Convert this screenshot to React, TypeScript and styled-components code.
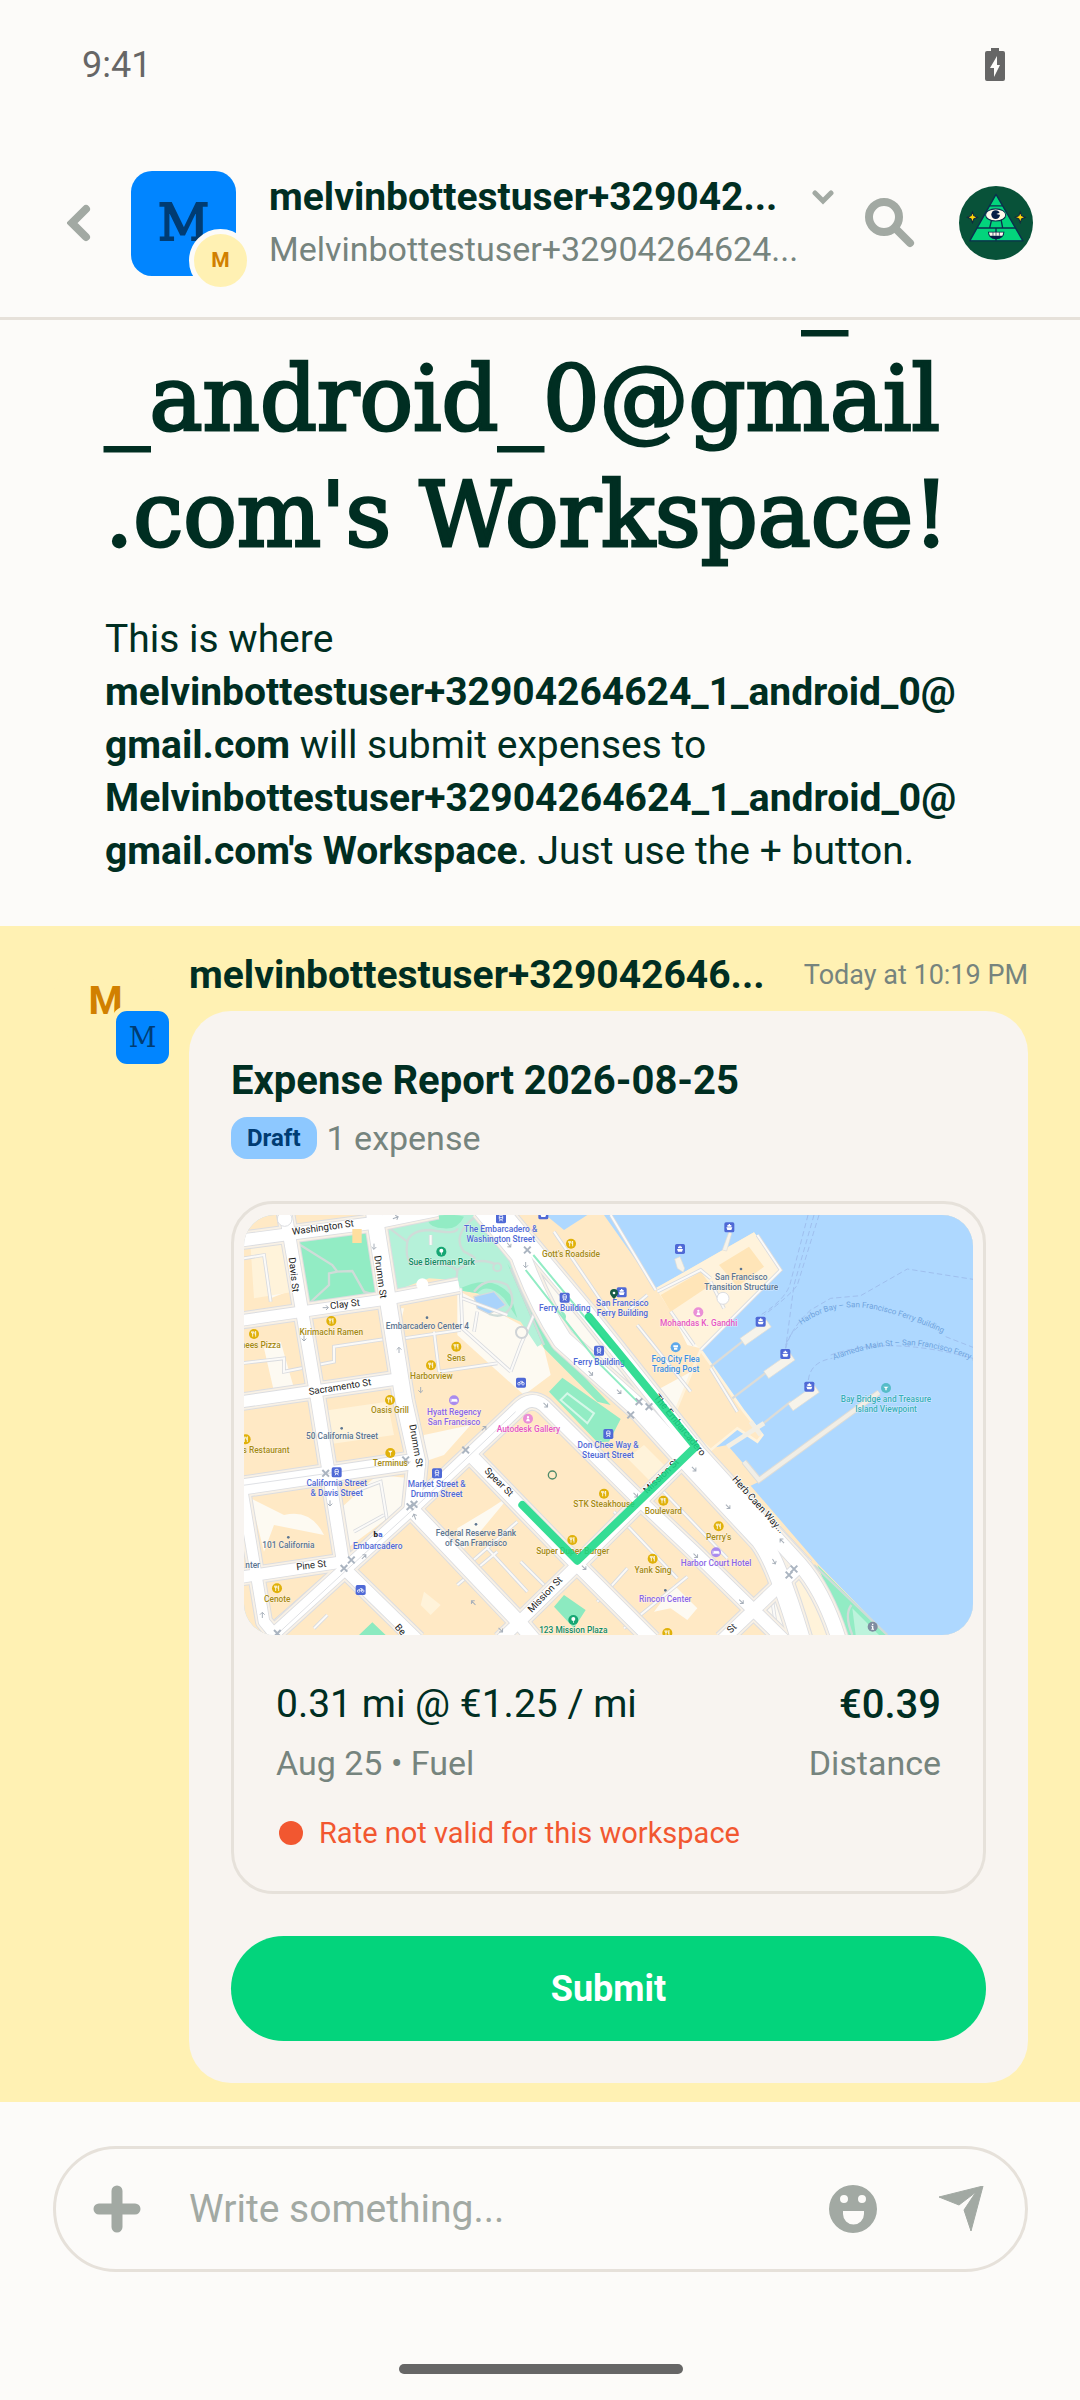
import React from "react";
import styled, { createGlobalStyle } from "styled-components";

const color = {
  bg: "#fcfbf9",
  card: "#f8f4f0",
  border: "#e6e1da",
  text: "#002e22",
  muted: "#76847e",
  icon: "#a2a9a3",
  highlight: "#fff1b3",
  green: "#03d47c",
  red: "#f25730",
  blue: "#0185ff",
  navy: "#003c73",
  sky: "#8dc8ff",
  amber: "#d18000",
  system: "#666666",
};
const sans = `Roboto, "Noto Sans", sans-serif`;
const serif = `"DejaVu Serif", "Liberation Serif", serif`;

const GlobalStyle = createGlobalStyle`
  *, *::before, *::after { box-sizing: border-box; }
  body { margin: 0; background: ${color.bg}; font-family: ${sans}; color: ${color.text}; }
  button, input { font-family: inherit; }
  svg { display: block; }
`;

const Screen = styled.div`
  display: flex;
  flex-direction: column;
  height: 100vh;
  background: ${color.bg};
`;

const StatusBar = styled.div`
  display: flex;
  flex: none;
  align-items: center;
  justify-content: space-between;
  height: 129px;
  padding: 0 75px 0 82px;
  color: ${color.system};
  font-size: 36px;
  line-height: 42px;
`;

const Toolbar = styled.header`
  display: flex;
  flex: none;
  align-items: center;
  height: 191px;
  padding: 0 34px 0 26px;
  border-bottom: 3px solid ${color.border};
`;

const IconButton = styled.button<{ $w: number }>`
  display: flex;
  flex: none;
  align-items: center;
  justify-content: center;
  width: ${(p) => p.$w}px;
  height: 105px;
  padding: 0;
  border: 0;
  background: none;
  color: ${color.icon};
`;

const AvatarStack = styled.div`
  position: relative;
  flex: none;
  width: 105px;
  height: 105px;
`;

const MainAvatar = styled.div<{ $kind: "workspace" | "user" }>`
  display: flex;
  align-items: center;
  justify-content: center;
  width: 105px;
  height: 105px;
  border-radius: ${(p) => (p.$kind === "workspace" ? "21px" : "50%")};
  background: ${(p) => (p.$kind === "workspace" ? color.blue : color.highlight)};
  color: ${(p) => (p.$kind === "workspace" ? color.navy : color.amber)};
  font-family: ${(p) => (p.$kind === "workspace" ? serif : sans)};
  font-weight: ${(p) => (p.$kind === "workspace" ? 400 : 700)};
  font-size: ${(p) => (p.$kind === "workspace" ? 50 : 39)}px;
  -webkit-text-stroke: ${(p) => (p.$kind === "workspace" ? "2px" : "0")};
`;

const SubAvatar = styled.div<{ $kind: "workspace" | "user"; $ring: string }>`
  position: absolute;
  right: -16px;
  bottom: -16px;
  display: flex;
  align-items: center;
  justify-content: center;
  width: 63px;
  height: 63px;
  border: 5px solid ${(p) => p.$ring};
  border-radius: ${(p) => (p.$kind === "workspace" ? "16px" : "50%")};
  background: ${(p) => (p.$kind === "workspace" ? color.blue : color.highlight)};
  color: ${(p) => (p.$kind === "workspace" ? color.navy : color.amber)};
  font-family: ${(p) => (p.$kind === "workspace" ? serif : sans)};
  font-weight: ${(p) => (p.$kind === "workspace" ? 400 : 700)};
  font-size: ${(p) => (p.$kind === "workspace" ? 27 : 21)}px;
`;

const TitleBlock = styled.div`
  flex: 1;
  min-width: 0;
  padding-left: 33px;
  line-height: 52px;
  white-space: nowrap;
`;
const TitleRow = styled.div`
  display: flex;
  align-items: center;
  justify-content: space-between;
`;
const TitleText = styled.h1`
  margin: 0;
  font-size: 39px;
  font-weight: 700;
`;
const Subtitle = styled.div`
  color: ${color.muted};
  font-size: 34px;
`;
const MenuButton = styled.button`
  display: flex;
  align-items: center;
  height: 52px;
  padding: 0;
  border: 0;
  background: none;
  color: ${color.icon};
`;

const Chat = styled.main`
  display: flex;
  flex: 1;
  flex-direction: column;
  justify-content: flex-end;
  min-height: 0;
  overflow: hidden;
`;

const Intro = styled.section`
  flex: none;
  padding: 0 105px 48px;
`;
const Welcome = styled.h2`
  margin: 0 0 40px;
  font-family: ${serif};
  font-size: 89px;
  font-weight: 400;
  line-height: 116px;
  white-space: nowrap;
  -webkit-text-stroke: 3px ${color.text};
  span { display: block; }
`;
const IntroText = styled.p`
  margin: 0;
  font-size: 39px;
  line-height: 53px;
`;

const Message = styled.article`
  display: flex;
  flex: none;
  gap: 31px;
  padding: 22px 52px 19px 53px;
  background: ${color.highlight};
`;
const MessageBody = styled.div`
  flex: 1;
  min-width: 0;
`;
const MessageHead = styled.div`
  display: flex;
  align-items: center;
  justify-content: space-between;
  margin-bottom: 8px;
  line-height: 55px;
  white-space: nowrap;
`;
const Author = styled.span`
  font-size: 39px;
  font-weight: 700;
`;
const Time = styled.time`
  color: ${color.muted};
  font-size: 27px;
`;

const ReportCard = styled.div`
  padding: 42px;
  border-radius: 42px;
  background: ${color.card};
`;
const ReportTitle = styled.h3`
  margin: 0 0 9px;
  font-size: 40px;
  font-weight: 700;
  line-height: 55px;
`;
const ReportMeta = styled.div`
  display: flex;
  align-items: center;
  gap: 10px;
  margin-bottom: 42px;
  color: ${color.muted};
  font-size: 34px;
  line-height: 42px;
`;
const Badge = styled.span`
  padding: 0 16px;
  border-radius: 16px;
  background: ${color.sky};
  color: ${color.navy};
  font-size: 24px;
  font-weight: 700;
`;

const ExpenseCard = styled.div`
  margin-bottom: 42px;
  padding: 11px 10px 37px;
  border: 3px solid ${color.border};
  border-radius: 42px;
`;
const MapFrame = styled.div`
  height: 420px;
  margin-bottom: 43px;
  overflow: hidden;
  border-radius: 31px;
  background: #aed8ff;
  svg { width: 100%; height: 100%; }
`;
const Line = styled.div<{ $minor?: boolean }>`
  display: flex;
  justify-content: space-between;
  margin-bottom: ${(p) => (p.$minor ? 24 : 7)}px;
  padding: 0 32px;
  color: ${(p) => (p.$minor ? color.muted : color.text)};
  font-size: ${(p) => (p.$minor ? 34 : 39)}px;
  line-height: ${(p) => (p.$minor ? 50 : 53)}px;
`;
const Amount = styled.span`
  font-size: 40px;
  font-weight: 500;
`;
const Violation = styled.div`
  display: flex;
  align-items: center;
  gap: 16px;
  padding: 0 35px;
  color: ${color.red};
  font-size: 29px;
  line-height: 42px;
  &::before {
    content: "";
    width: 24px;
    height: 24px;
    border-radius: 50%;
    background: ${color.red};
  }
`;
const SubmitButton = styled.button`
  display: block;
  width: 100%;
  height: 105px;
  border: 0;
  border-radius: 53px;
  background: ${color.green};
  color: #fff;
  font-size: 36px;
  font-weight: 700;
`;

const Footer = styled.footer`
  flex: none;
  padding: 44px 52px 26px 53px;
`;
const Composer = styled.form`
  display: flex;
  align-items: center;
  height: 126px;
  padding: 0 8px;
  border: 3px solid ${color.border};
  border-radius: 63px;
`;
const ComposerInput = styled.input`
  flex: 1;
  min-width: 0;
  height: 53px;
  padding: 0 0 0 20px;
  border: 0;
  outline: 0;
  background: none;
  color: ${color.text};
  font-size: 39px;
  &::placeholder { color: ${color.icon}; opacity: 1; }
`;
const HomeBar = styled.div`
  width: 284px;
  height: 10px;
  margin: 92px auto 0;
  border-radius: 5px;
  background: ${color.system};
`;

/* ---------- map ---------- */

type Label = { x: number; y: number; c: string; t: string[]; icon?: string; ix?: number; iy?: number };
const gold = "#a58a12", transit = "#4f69d6", slate = "#5c7590", violet = "#8b66e6", pink = "#e656c2";

const labels: Label[] = [
  { x: 262, y: 359, c: gold, t: ["Kirimachi Ramen"], icon: "food", ix: 262, iy: 318 },
  { x: 50, y: 399, c: gold, t: ["nees Pizza"], icon: "food", ix: 30, iy: 357 },
  { x: 637, y: 437, c: gold, t: ["Sens"], icon: "food", ix: 637, iy: 395 },
  { x: 562, y: 493, c: gold, t: ["Harborview"], icon: "food", ix: 561, iy: 451 },
  { x: 438, y: 595, c: gold, t: ["Oasis Grill"], icon: "food", ix: 438, iy: 555 },
  { x: 981, y: 127, c: gold, t: ["Gott's Roadside"], icon: "food", ix: 981, iy: 86 },
  { x: 66, y: 715, c: gold, t: ["s Restaurant"], icon: "food", ix: 5, iy: 673 },
  { x: 439, y: 753, c: gold, t: ["Terminus"], icon: "bar", ix: 439, iy: 714 },
  { x: 1080, y: 877, c: gold, t: ["STK Steakhouse"], icon: "food", ix: 1080, iy: 836 },
  { x: 986, y: 1018, c: gold, t: ["Super Duper Burger"], icon: "food", ix: 985, iy: 975 },
  { x: 100, y: 1161, c: gold, t: ["Cenote"], icon: "food", ix: 99, iy: 1120 },
  { x: 1258, y: 898, c: gold, t: ["Boulevard"], icon: "food", ix: 1258, iy: 857 },
  { x: 1424, y: 975, c: gold, t: ["Perry's"], icon: "food", ix: 1424, iy: 934 },
  { x: 1227, y: 1073, c: gold, t: ["Yank Sing"], icon: "food", ix: 1226, iy: 1031 },
  { x: 770, y: 50, c: transit, t: ["The Embarcadero &", "Washington Street"], icon: "tram", ix: 771, iy: 10 },
  { x: 962, y: 288, c: transit, t: ["Ferry Building"], icon: "tram", ix: 962, iy: 248 },
  { x: 1135, y: 273, c: transit, t: ["San Francisco", "Ferry Building"], icon: "ferry", ix: 1133, iy: 232 },
  { x: 1065, y: 449, c: transit, t: ["Ferry Building"], icon: "tram", ix: 1065, iy: 407 },
  { x: 1092, y: 699, c: transit, t: ["Don Chee Way &", "Steuart Street"], icon: "tram", ix: 1093, iy: 657 },
  { x: 278, y: 813, c: transit, t: ["California Street", "& Davis Street"], icon: "tram", ix: 278, iy: 772 },
  { x: 578, y: 816, c: transit, t: ["Market Street &", "Drumm Street"], icon: "tram", ix: 579, iy: 775 },
  { x: 401, y: 1002, c: transit, t: ["Embarcadero"] },
  { x: 550, y: 341, c: slate, t: ["Embarcadero Center 4"], icon: "dot", ix: 549, iy: 308 },
  { x: 294, y: 672, c: slate, t: ["50 California Street"], icon: "dot", ix: 293, iy: 640 },
  { x: 133, y: 1000, c: slate, t: ["101 California"], icon: "dot", ix: 133, iy: 967 },
  { x: 696, y: 962, c: slate, t: ["Federal Reserve Bank", "of San Francisco"], icon: "dot", ix: 696, iy: 928 },
  { x: 1492, y: 195, c: slate, t: ["San Francisco", "Transition Structure"], icon: "dot", ix: 1491, iy: 162 },
  { x: 26, y: 1059, c: slate, t: ["nter"] },
  { x: 593, y: 151, c: "#138a63", t: ["Sue Bierman Park"], icon: "park", ix: 592, iy: 110 },
  { x: 988, y: 1255, c: "#138a63", t: ["123 Mission Plaza"], icon: "park", ix: 988, iy: 1215 },
  { x: 630, y: 599, c: violet, t: ["Hyatt Regency", "San Francisco"], icon: "hotel", ix: 630, iy: 556 },
  { x: 1416, y: 1053, c: violet, t: ["Harbor Court Hotel"], icon: "hotel", ix: 1416, iy: 1012 },
  { x: 1264, y: 1160, c: violet, t: ["Rincon Center"], icon: "dot", ix: 1264, iy: 1126 },
  { x: 853, y: 652, c: pink, t: ["Autodesk Gallery"], icon: "sight", ix: 852, iy: 611 },
  { x: 1364, y: 332, c: pink, t: ["Mohandas K. Gandhi"], icon: "sight", ix: 1363, iy: 292 },
  { x: 1295, y: 440, c: "#3c8fe0", t: ["Fog City Flea", "Trading Post"], icon: "shop", ix: 1295, iy: 397 },
  { x: 1926, y: 562, c: "#37afb8", t: ["Bay Bridge and Treasure", "Island Viewpoint"], icon: "view", ix: 1926, iy: 519 },
];

const extraPins: [string, number, number][] = [
  ["ferry", 1308, 102], ["ferry", 1456, 37], ["ferry", 1550, 320], ["ferry", 1624, 417], ["ferry", 1696, 515],
  ["ferry", 898, -2], ["bike", 831, 503], ["bike", 350, 1125], ["food", 1270, 1254], ["info", 1886, 1235],
];

const streetNames: [string, number, number, number][] = [
  ["Washington St", 238, 47, -8], ["Davis St", 140, 180, 84], ["Drumm St", 400, 187, 82], ["Clay St", 304, 277, -7],
  ["Sacramento St", 289, 525, -9], ["Drumm St", 507, 694, 80], ["Spear St", 758, 808, 45], ["Pine St", 203, 1060, -7],
  ["Mission St", 910, 1145, -46], ["Mission St", 1258, 790, -44], ["Herb Caen Way...", 1536, 875, 48],
  ["The Embarcadero", 1300, 636, 51], ["St", 1470, 1247, -45], ["Be", 462, 1250, 48],
];

const roads: { d: string; w: number }[] = [
  { d: "M-20 78 L400 22 L580 -15", w: 36 },
  { d: "M-20 318 L435 252 L645 212", w: 32 },
  { d: "M-20 562 L460 492", w: 34 },
  { d: "M-20 818 L540 735", w: 46 },
  { d: "M-20 1088 L300 1040", w: 34 },
  { d: "M122 -20 L220 560 L300 1060 L520 1275", w: 36 },
  { d: "M388 -20 L480 560 L520 740 L505 885", w: 48 },
  { d: "M-5 830 L60 1220 L105 1275", w: 32 },
  { d: "M80 1265 L300 1065 L505 880 L820 582 Q860 540 900 572 L1175 845 L1355 1015 L1620 1275", w: 36 },
  { d: "M665 705 L1000 1050 L1225 1275", w: 38 },
  { d: "M505 885 L825 1222 L870 1275", w: 42 },
  { d: "M1355 695 L1000 1050 L770 1275", w: 34 },
  { d: "M1655 1065 L1435 1275", w: 36 },
  { d: "M715 -20 L830 120 Q880 260 955 375 L1195 590 L1345 755 L1550 975 Q1600 1040 1670 1275", w: 56 },
  { d: "M775 -10 L1035 300 L1285 615 L1365 715 L1665 1045 Q1740 1130 1785 1275", w: 42 },
];

const alleys = [
  "M480 370 L650 345 M570 350 L585 470 M585 470 L760 445 M-10 445 L120 430 L120 470 L270 440 L270 395 L470 365",
  "M650 220 L655 340 L800 470 M655 250 L790 300 M800 470 L830 390 L900 230 M700 290 L690 350",
  "M930 50 L1100 300 M1100 0 L1235 225 M1150 290 L1210 240 M1240 230 L1370 165 L1400 190 M1540 60 L1610 165 L1370 405",
  "M1280 290 L1350 390 M1400 200 L1440 280 M1180 330 L1340 530 M1400 460 L1480 590",
  "M820 920 L660 1060 L760 1170 M640 1110 L760 1010 M730 1000 L850 1130 M830 1040 L920 1130",
  "M1110 890 L1300 1090 M1220 790 L1450 1030 M1330 1085 L1140 1240 M1150 1060 L1060 1160 M1440 800 L1560 930",
  "M290 900 L320 1040 M330 830 L410 800 L430 920 M330 950 L420 900 M90 1220 L330 1010 M250 1200 L210 1240",
  "M1480 800 L1700 1040 M1560 990 L1600 1260 M1600 1100 L1640 1250",
  "M0 130 L60 120 L80 260 M20 90 L110 80 M560 60 L560 90",
];

function Pin({ kind, x, y }: { kind: string; x: number; y: number }) {
  const fills: Record<string, string> = {
    food: "#e0b10a", bar: "#e0b10a", park: "#17a673", hotel: "#a98bee", sight: "#ea8fd6", shop: "#5ea8ea",
    view: "#56bcc8", info: "#7e8ca0",
  };
  if (kind === "dot") return <circle cx={x} cy={y} r={4} fill={slate} />;
  if (kind === "tram" || kind === "ferry" || kind === "bike") {
    return (
      <g transform={`translate(${x} ${y})`}>
        <rect x={-15} y={-15} width={30} height={30} rx={5} fill="#4f69d6" />
        {kind === "tram" && (
          <g fill="none" stroke="#fff" strokeWidth={2.5}>
            <rect x={-5} y={-9} width={10} height={13} rx={3} />
            <path d="M-5 -2 H5 M-5 9 L-2 4 M5 9 L2 4" />
          </g>
        )}
        {kind === "ferry" && <path d="M-9 0 H9 L6 8 H-6 Z M-6 -2 V-7 H6 V-2 Z M-2 -7 V-10 H2 V-7 Z" fill="#fff" />}
        {kind === "bike" && (
          <g fill="none" stroke="#fff" strokeWidth={2}>
            <circle cx={-6} cy={3} r={4} />
            <circle cx={6} cy={3} r={4} />
            <path d="M-6 3 L-2 -4 H4 L6 3 M0 3 L4 -4" />
          </g>
        )}
      </g>
    );
  }
  return (
    <g transform={`translate(${x} ${y})`}>
      <circle r={15} fill={fills[kind]} />
      {kind === "food" && <path d="M-4 -8 V8 M-7 -8 V-3 Q-4 0 -1 -3 V-8 M5 8 V-8 Q2 -6 3 1 H5" fill="none" stroke="#fff" strokeWidth={2.4} />}
      {kind === "bar" && <path d="M-7 -7 H7 L0 1 Z M-1 0 H1 V8 H-1 Z" fill="#fff" />}
      {kind === "park" && <path d="M0 -9 a6 6 0 0 1 0 12 a6 6 0 0 1 0 -12 M-1 0 H1 V9 H-1 Z" fill="#fff" />}
      {kind === "hotel" && <path d="M-9 -5 V6 M-9 3 H9 M9 6 V-1 M-6 -3 H8 V2 H-6 Z" fill="#fff" stroke="#fff" strokeWidth={2} />}
      {kind === "sight" && <path d="M-3 0 H3 L6 8 H-6 Z M0 -8 a3 3 0 0 1 0 7 a3 3 0 0 1 0 -7" fill="#fff" />}
      {kind === "shop" && <path d="M-7 -6 H7 V0 H-7 Z M-5 1 H5 V7 H-5 Z" fill="#fff" />}
      {kind === "view" && <path d="M-8 -4 H8 L2 1 V7 H-2 V1 Z" fill="#fff" />}
      {kind === "info" && <path d="M-2 -9 H2 V-5 H-2 Z M-4 -3 H2 V6 H4 V9 H-4 V6 H-2 V0 H-4 Z" fill="#fff" />}
    </g>
  );
}

const crossings = [[485, 735], [245, 775], [510, 868], [498, 875], [665, 705], [300, 1060], [322, 1035], [850, 105], [1185, 560], [1215, 575], [1160, 600], [1635, 1080], [1650, 1062], [100, 1255]];
const arrows: [number, number, number][] = [
  [390, 95, 90], [180, 370, 90], [465, 405, -90], [530, 525, 90], [795, 90, 50], [845, 150, 90], [1040, 475, 45],
  [1125, 530, 45], [1175, 840, 45], [1350, 762, 45], [1452, 875, 45], [1355, 1022, 45], [1590, 1040, 60], [1614, 978, -135],
  [1492, 1160, 45], [1020, 1058, 45], [360, 1025, -45], [512, 905, -110], [258, 865, 90], [55, 1200, -90], [688, 1163, -135],
  [770, 1245, 45], [720, 640, -45], [245, 278, 0], [905, 570, 45], [455, 8, -20],
];

function TripMap() {
  return (
    <svg viewBox="0 0 2187 1260" preserveAspectRatio="xMidYMid slice" role="img" aria-label="Trip route map">
      <rect width={2187} height={1260} fill="#ffe9c5" />
      {/* open plazas and paler blocks */}
      <g fill="#fdfaf2">
        <path d="M640 225 L830 330 L900 400 L920 480 L840 540 L640 360 Z" />
        <path d="M840 130 L1040 330 L1190 560 L1080 520 L940 350 Z" />
        <path d="M20 850 L120 900 Q200 880 240 960 L90 930 L60 1010 Z" />
        <path d="M290 880 L400 780 L500 790 L470 880 L310 1000 Z" />
        <path d="M540 660 L680 630 L600 720 L540 740 Z M740 880 L800 840 L700 960 L640 1020 L640 940 Z" />
        <path d="M1545 1200 L1605 1130 L1640 1250 L1570 1250 Z" />
        <path d="M1280 290 L1440 200 L1500 260 L1370 400 L1330 390 Z M1230 530 L1360 460 L1420 500 L1290 600 Z" />
        <path d="M1290 1110 L1360 1180 L1330 1215 L1280 1180 L1230 1190 Z" />
        <path d="M430 280 L460 370 L480 280 Z M75 130 L110 120 L130 230 L80 250 Z M60 400 L110 380 L150 520 L90 530 Z" />
      </g>
      <g fill="#fff3da">
        <path d="M20 100 L130 85 L150 230 L30 250 Z M220 590 L430 560 L450 660 L240 690 Z" />
        <path d="M540 1130 L590 1170 L560 1200 L530 1170 Z M1560 1010 L1620 1110 L1680 1260 L1760 1260 L1700 1140 L1560 950 Z" />
        <path d="M1200 690 L1300 790 L1250 830 L1150 730 Z M1350 990 L1450 1080 L1470 1130 L1430 1060 Z" />
      </g>
      {/* bay */}
      <path d="M1080 0 L1140 85 L1235 220 L1530 52 L1613 165 L1370 405 L1400 460 L1500 590 L1400 700 L1450 690 L1545 800 L1520 812 L1725 1050 L1930 1260 H2187 V0 Z" fill="#aed8ff" />
      <path d="M905 0 L960 45 L1030 0 Z" fill="#aed8ff" />
      <path d="M1235 220 L1530 52 L1613 165 L1370 405 L1320 350 Z" fill="#fff3dc" />
      <path d="M1425 150 L1515 95 L1560 155 L1480 215 Z M1250 240 L1370 170 L1400 210 L1280 290 Z" fill="#ffe5b8" />
      <path d="M1370 405 L1500 590 L1555 660 L1540 680 L1480 640 L1400 705 L1290 600 Z" fill="#ffe9c5" stroke="#fff3dc" strokeWidth={8} />
      {/* parks */}
      <path d="M430 30 L560 -5 H700 L800 130 L860 260 L905 380 L880 395 L830 320 L780 300 L700 235 L640 225 L630 195 L555 190 L460 225 Z" fill="#b5f1d9" />
      <path d="M140 65 L365 27 L398 240 L172 275 Z M550 15 Q600 -10 660 5 Q640 45 600 40 Q560 40 550 15 Z M640 225 Q740 170 800 240 L820 310 L780 250 Q730 200 700 235 Z M790 145 L940 400 L1100 570 L1060 560 L900 400 Z M915 530 L955 488 L1130 612 L1095 680 L1060 682 Z M1720 1050 L1805 1260 H1930 Z" fill="#92ecc4" />
      <path d="M930 1175 L960 1140 L1025 1185 L990 1240 Z M345 1260 L385 1222 L425 1260 Z" fill="#8ceac0" />
      <path d="M1825 1180 L1905 1260 H1835 Z" fill="#bdf3dc" />
      <path d="M950 555 L970 535 L1050 595 L1030 625 Z" fill="none" stroke="#d5f8e8" strokeWidth={6} />
      <circle cx={950} cy={305} r={16} fill="#92ecc4" />
      <circle cx={1030} cy={417} r={15} fill="#92ecc4" />
      <path d="M690 245 L750 230 L785 270 L735 297 L700 280 Z" fill="#a9d3fb" stroke="#d6dadd" strokeWidth={4} />
      <g fill="none" stroke="#cfdcd8" strokeWidth={7}>
        <path d="M145 75 L265 150 L280 170 L325 168 L360 230 L395 240 M280 170 L255 175 L255 210 L190 270" />
        <path d="M430 35 L490 80 Q480 150 520 150 M490 80 Q500 45 560 45 Q640 60 640 40 M520 150 Q630 140 640 170 L635 210 M640 165 Q700 120 760 150 M700 0 Q620 60 660 110 Q700 130 690 130" />
        <path d="M690 230 Q730 180 790 210 Q820 260 790 290 Q770 310 735 297 M800 160 L900 390 M1710 1050 L1930 1260 M1822 1170 Q1800 1200 1825 1260" />
      </g>
      {/* minor streets */}
      {alleys.map((d) => (
        <g key={d} fill="none">
          <path d={d} stroke="#d9dbdf" strokeWidth={11} />
          <path d={d} stroke="#fbfaf8" strokeWidth={6} />
        </g>
      ))}
      {/* sidewalks, kerbs, then the road surface */}
      {roads.map((r) => <path key={"s" + r.d} d={r.d} fill="none" stroke="#dcdde0" strokeWidth={r.w + 22} strokeLinejoin="round" />)}
      {roads.map((r) => <path key={"k" + r.d} d={r.d} fill="none" stroke="#f8f1e6" strokeWidth={r.w + 16} strokeLinejoin="round" />)}
      {roads.map((r) => <path key={"e" + r.d} d={r.d} fill="none" stroke="#dcdde0" strokeWidth={r.w + 5} strokeLinejoin="round" />)}
      {roads.map((r) => <path key={"r" + r.d} d={r.d} fill="none" stroke="#ffffff" strokeWidth={r.w} strokeLinejoin="round" />)}
      <path d="M-10 812 L500 740 M95 1262 L300 1072 L505 885 L815 590" fill="none" stroke="#dfe1e5" strokeWidth={3} />
      <path d="M868 120 L1100 400 M845 165 L1060 440 L1180 560" fill="none" stroke="#92ecc4" strokeWidth={6} />
      <circle cx={535} cy={208} r={18} fill="#fff" />
      <circle cx={122} cy={12} r={22} fill="#fff" stroke="#dcdde0" strokeWidth={3} />
      <circle cx={1437} cy={250} r={18} fill="#fff" stroke="#dcdde0" strokeWidth={3} />
      <circle cx={833} cy={352} r={17} fill="#fdfaf2" stroke="#cfd3d6" strokeWidth={6} />
      <circle cx={760} cy={157} r={12} fill="#b5f1d9" stroke="#cfdcd8" strokeWidth={6} />
      <rect x={325} y={42} width={28} height={42} fill="#ffdf9f" />
      {/* piers */}
      <g stroke="#dcdcd8" strokeWidth={7} fill="none">
        <path d="M1400 455 L1495 380 M1465 550 L1570 470 M1540 640 L1640 560" />
      </g>
      <g fill="#f6f3ea" stroke="#dfddd5" strokeWidth={2}>
        <rect x={-48} y={-13} width={96} height={26} transform="translate(1535 353) rotate(-35)" />
        <rect x={-48} y={-13} width={96} height={26} transform="translate(1606 452) rotate(-35)" />
        <rect x={-48} y={-13} width={96} height={26} transform="translate(1679 549) rotate(-35)" />
        <path d="M1322 160 L1308 125 L1292 132 L1300 160 L1318 172 Z M1435 105 L1455 50 L1463 55 L1448 108 Z" />
      </g>
      <path d="M1450 695 L1560 625 M1520 620 L1550 660" stroke="#f3efe4" strokeWidth={14} fill="none" />
      <path d="M1500 740 L1545 795 L1905 532" stroke="#dcdcd8" strokeWidth={18} fill="none" />
      <path d="M1500 740 L1545 795 L1905 532" stroke="#f1eee6" strokeWidth={12} fill="none" />
      {/* ferry lines */}
      <g fill="none" stroke="#9fbfee" strokeWidth={3} strokeDasharray="16 9">
        <path d="M1692 0 L1640 200 Q1630 250 1550 300 M1710 0 L1650 210 L1625 400 M1725 0 L1660 210 Q1640 240 1560 300" />
        <path d="M1625 400 Q1640 340 1700 285 L1760 250 L1850 242 L1990 162 L2187 193" />
        <path d="M1625 390 Q1640 350 1670 330 M2105 365 L2187 397 M1693 495 Q1700 440 1765 430 M1760 420 Q1930 360 2187 430" />
      </g>
      <path id="ferry-a" d="M1672 330 Q1780 250 1920 290 Q2020 315 2140 375" fill="none" />
      <path id="ferry-b" d="M1770 435 Q1930 370 2070 400 Q2130 410 2230 455" fill="none" />
      <g fill="#6fa3dd" fontFamily={sans} fontSize={24}>
        <text><textPath href="#ferry-a">Harbor Bay – San Francisco Ferry Building</textPath></text>
        <text><textPath href="#ferry-b">Alameda Main St – San Francisco Ferry B</textPath></text>
      </g>
      {crossings.map(([x, y]) => (
        <path key={`${x}-${y}`} d={`M${x - 10} ${y - 10} l20 20 m0 -20 l-20 20`} stroke="#aab4c0" strokeWidth={6} />
      ))}
      {arrows.map(([x, y, a]) => (
        <path key={`${x}-${y}`} transform={`translate(${x} ${y}) rotate(${a})`} d="M-9 0 H8 M1 -7 L8 0 L1 7" fill="none" stroke="#a8b0ba" strokeWidth={3} />
      ))}
      {/* street names, points of interest */}
      <g fontFamily={sans} textAnchor="middle" fontSize={29} fill="#1d1d1d" stroke="#fff" strokeWidth={5} paintOrder="stroke">
        {streetNames.map(([t, x, y, a]) => (
          <text key={`${t}${x}`} transform={`translate(${x} ${y}) rotate(${a})`}>{t}</text>
        ))}
      </g>
      <g fontFamily={sans} textAnchor="middle" fontSize={25} fontWeight={500}>
        {labels.map((l) => l.t.map((t, i) => (
          <text key={`${t}${l.x}${l.y}`} x={l.x} y={l.y + i * 30} fill={l.c} stroke="#fff" strokeOpacity={0.5} strokeWidth={3} paintOrder="stroke">{t}</text>
        )))}
        <text x={402} y={966} fontSize={24} fontWeight={900} fill="#222">b<tspan fill="#4f69d6">a</tspan></text>
      </g>
      {labels.map((l) => l.icon ? <Pin key={`${l.t[0]}${l.ix}${l.iy}`} kind={l.icon} x={l.ix!} y={l.iy!} /> : null)}
      {extraPins.map(([k, x, y]) => <Pin key={`${x}-${y}`} kind={k} x={x} y={y} />)}
      {/* travelled route */}
      <path d="M1035 305 L1355 695 L1000 1037 L835 870" fill="none" stroke="#17d885" strokeOpacity={0.87} strokeWidth={24} strokeLinecap="round" strokeLinejoin="round" />
      <circle cx={925} cy={780} r={12} fill="none" stroke="#4f8a6a" strokeWidth={4} />
      <path d="M1110 252 Q1098 240 1098 234 a12 12 0 0 1 24 0 Q1122 240 1110 252 Z" fill="#155c45" />
      <circle cx={1110} cy={234} r={4} fill="#fff" />
    </svg>
  );
}

/* ---------- icons ---------- */

const BatteryIcon = () => (
  <svg width="20" height="33" viewBox="0 0 20 33" fill="currentColor" aria-hidden>
    <path fillRule="evenodd" d="M6 0 H14 V3 H18 Q20 3 20 5 V31 Q20 33 18 33 H2 Q0 33 0 31 V5 Q0 3 2 3 H6 Z M12 8 L5 20 H9 V29 L15 17 H12 Z" />
  </svg>
);
const BackIcon = () => (
  <svg width="24" height="38" viewBox="0 0 24 38" fill="none" stroke="currentColor" strokeWidth="8" strokeLinecap="round" aria-hidden>
    <path d="M19 5 L5 19 L19 33" />
  </svg>
);
const DownIcon = () => (
  <svg width="22" height="15" viewBox="0 0 22 15" fill="none" stroke="currentColor" strokeWidth="5" strokeLinecap="round" aria-hidden>
    <path d="M3 3 L11 11 L19 3" />
  </svg>
);
const SearchIcon = () => (
  <svg width="50" height="50" viewBox="0 0 50 50" fill="none" stroke="currentColor" strokeWidth="8" strokeLinecap="round" aria-hidden>
    <circle cx="19" cy="19" r="15" />
    <path d="M31 31 L45 45" />
  </svg>
);
const PlusIcon = () => (
  <svg width="48" height="48" viewBox="0 0 48 48" stroke="currentColor" strokeWidth="11" strokeLinecap="round" aria-hidden>
    <path d="M24 6 V42 M6 24 H42" />
  </svg>
);
const EmojiIcon = () => (
  <svg width="48" height="48" viewBox="0 0 48 48" fill="currentColor" aria-hidden>
    <path fillRule="evenodd" d="M24 0 A24 24 0 0 1 24 48 A24 24 0 0 1 24 0 Z M15 10 A4 4 0 0 0 15 18 A4 4 0 0 0 15 10 Z M33 10 A4 4 0 0 0 33 18 A4 4 0 0 0 33 10 Z M14 26 H35 V29 A10 10 0 0 1 14 29 Z" />
  </svg>
);
const SendIcon = () => (
  <svg width="46" height="46" viewBox="0 0 46 46" fill="currentColor" stroke="currentColor" strokeWidth="1" strokeLinejoin="round" aria-hidden>
    <path d="M1 11 L45 0 L33 45 L26 24 L38 6 L21 19 Z" />
  </svg>
);
const ConciergeAvatar = () => (
  <svg width="74" height="74" viewBox="28 5 220 220" aria-hidden>
    <circle cx="138" cy="115" r="110" fill="#085239" />
    <path d="M138 30 L218 168 H60 Z" fill="#03d47c" stroke="#0b2e4d" strokeWidth="4" strokeLinejoin="round" />
    <path d="M119 64 H157 M82 130 H195 M125 105 L119 130 M153 105 L158 130 M138 130 V168" stroke="#0b2e4d" strokeWidth="4" />
    <ellipse cx="137" cy="91" rx="30" ry="18" fill="#fff9ec" stroke="#0b2e4d" strokeWidth="3" />
    <circle cx="137" cy="90" r="13" fill="#061f45" />
    <path d="M139 88 L151 84 L151 91 Z" fill="#fff9ec" />
    <path d="M114 141 H163 Q162 163 138 163 Q115 163 114 141 Z" fill="#061f45" />
    <path d="M117 143 H160 L157 153 H120 Z" fill="#fff9ec" />
    <path d="M129 142 V153 M138 142 V153 M148 142 V153" stroke="#0b2e4d" strokeWidth="2" />
    <path d="M68 82 L72 93 L83 98 L72 103 L68 114 L64 103 L53 98 L64 93 Z M210 82 L214 93 L225 98 L214 103 L210 114 L206 103 L195 98 L206 93 Z" fill="#fed607" stroke="#10263f" strokeWidth="3" />
  </svg>
);

export default function App() {
  return (
    <>
      <GlobalStyle />
      <Screen>
        <StatusBar>
          <span>9:41</span>
          <BatteryIcon />
        </StatusBar>

        <Toolbar>
          <IconButton $w={105} type="button" aria-label="Back"><BackIcon /></IconButton>
          <AvatarStack>
            <MainAvatar $kind="workspace">M</MainAvatar>
            <SubAvatar $kind="user" $ring={color.bg}>M</SubAvatar>
          </AvatarStack>
          <TitleBlock>
            <TitleRow>
              <TitleText>melvinbottestuser+329042...</TitleText>
              <MenuButton type="button" aria-label="Chat menu"><DownIcon /></MenuButton>
            </TitleRow>
            <Subtitle>Melvinbottestuser+32904264624...</Subtitle>
          </TitleBlock>
          <IconButton $w={112} type="button" aria-label="Search"><SearchIcon /></IconButton>
          <IconButton $w={100} type="button" aria-label="Concierge"><ConciergeAvatar /></IconButton>
        </Toolbar>

        <Chat>
          <Intro>
            <Welcome>
              <span>+32904264624_1</span>
              <span>_android_0@gmail</span>
              <span>.com's Workspace!</span>
            </Welcome>
            <IntroText>
              This is where <strong>melvinbottestuser+32904264624_1_android_0@<wbr />gmail.com</strong> will submit
              expenses to <strong>Melvinbottestuser+32904264624_1_android_0@<wbr />gmail.com's Workspace</strong>. Just
              use the + button.
            </IntroText>
          </Intro>

          <Message>
            <AvatarStack>
              <MainAvatar $kind="user">M</MainAvatar>
              <SubAvatar $kind="workspace" $ring={color.highlight}>M</SubAvatar>
            </AvatarStack>
            <MessageBody>
              <MessageHead>
                <Author>melvinbottestuser+329042646...</Author>
                <Time>Today at 10:19 PM</Time>
              </MessageHead>
              <ReportCard>
                <ReportTitle>Expense Report 2026-08-25</ReportTitle>
                <ReportMeta>
                  <Badge>Draft</Badge>
                  <span>1 expense</span>
                </ReportMeta>
                <ExpenseCard>
                  <MapFrame><TripMap /></MapFrame>
                  <Line>
                    <span>0.31 mi @ €1.25 / mi</span>
                    <Amount>€0.39</Amount>
                  </Line>
                  <Line $minor>
                    <span>Aug 25 • Fuel</span>
                    <span>Distance</span>
                  </Line>
                  <Violation>Rate not valid for this workspace</Violation>
                </ExpenseCard>
                <SubmitButton type="button">Submit</SubmitButton>
              </ReportCard>
            </MessageBody>
          </Message>
        </Chat>

        <Footer>
          <Composer onSubmit={(e) => e.preventDefault()}>
            <IconButton $w={105} type="button" aria-label="Add"><PlusIcon /></IconButton>
            <ComposerInput aria-label="Message" placeholder="Write something..." />
            <IconButton $w={105} type="button" aria-label="Emoji"><EmojiIcon /></IconButton>
            <IconButton $w={112} type="submit" aria-label="Send"><SendIcon /></IconButton>
          </Composer>
          <HomeBar />
        </Footer>
      </Screen>
    </>
  );
}
